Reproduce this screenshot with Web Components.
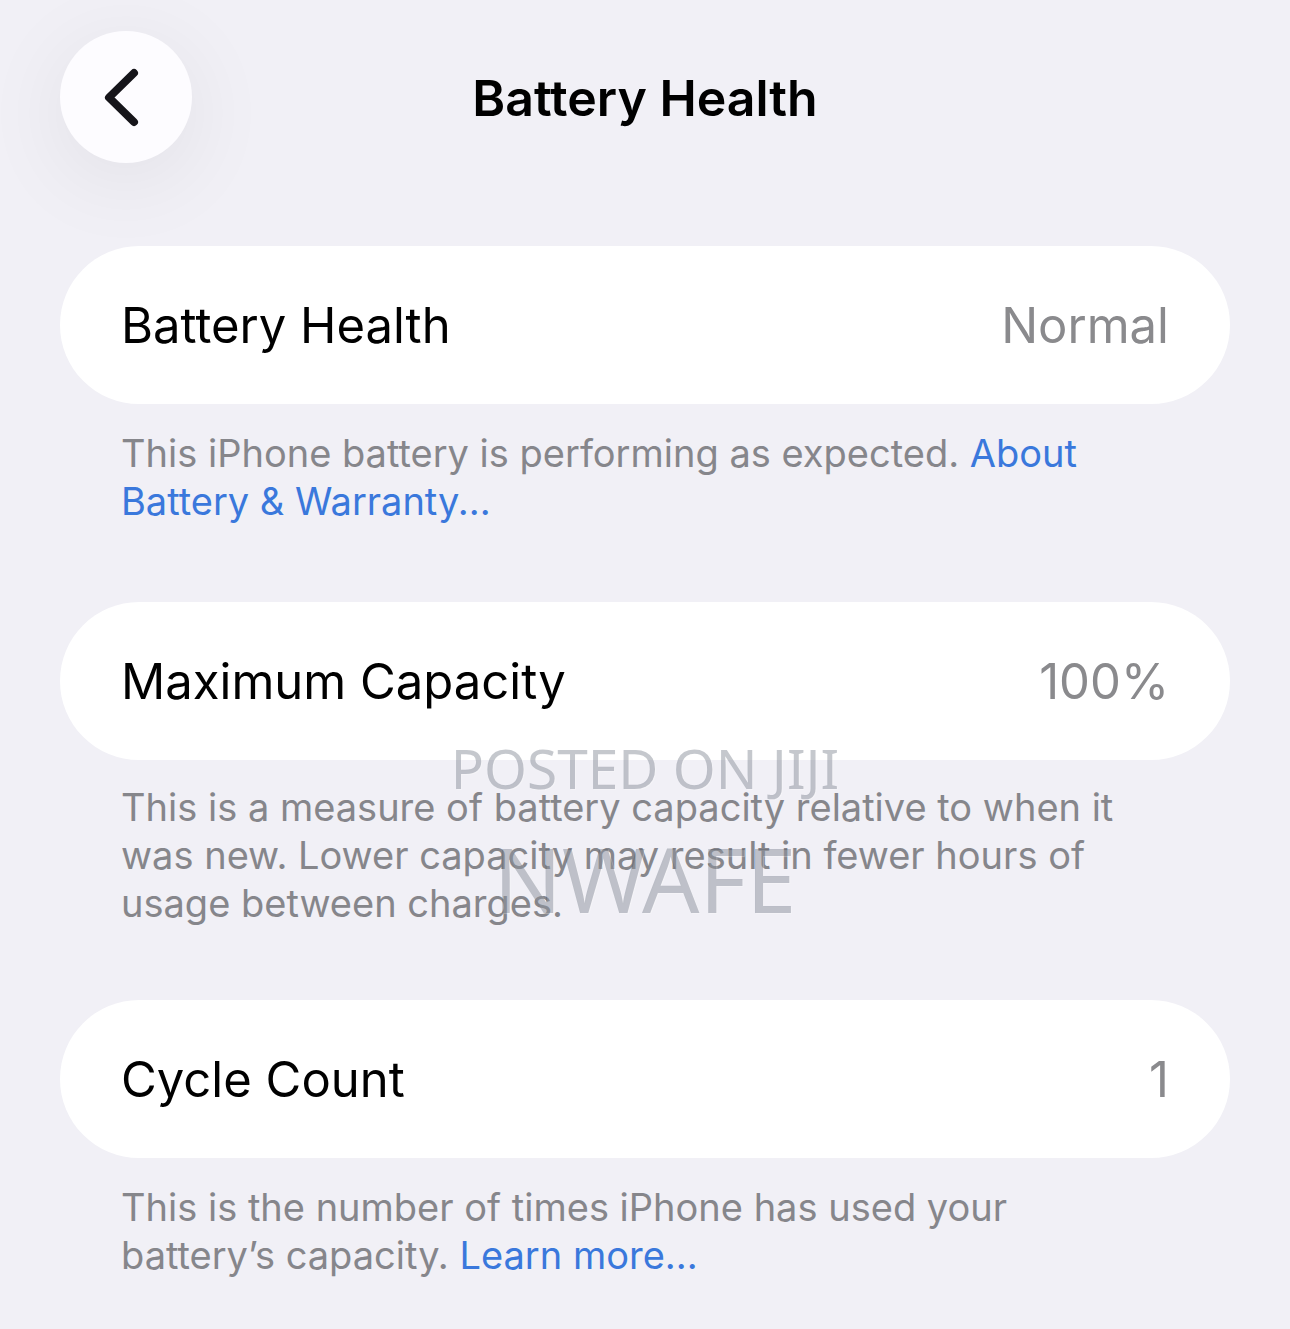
<!DOCTYPE html>
<html lang="en">
<head>
<meta charset="UTF-8">
<meta name="viewport" content="width=device-width, initial-scale=1">
<title>Battery Health</title>
<style>
    body {
        margin: 0;
        background: #f1f0f6;
        color: #000;
        font-family: Inter, "Liberation Sans", sans-serif;
    }
</style>
</head>
<body>
<settings-page>
    <nav-header slot="header">Battery Health</nav-header>

    <setting-group label="Battery Health" value="Normal" linked>
        This iPhone battery is performing as expected. <text-link href="#about">About Battery &amp; Warranty...</text-link>
    </setting-group>

    <setting-group label="Maximum Capacity" value="100%">
        This is a measure of battery capacity relative to when it was new. Lower capacity may result in fewer hours of usage between charges.
        <photo-stamp slot="overlay" name="NWAFE">POSTED ON JIJI</photo-stamp>
    </setting-group>

    <setting-group label="Cycle Count" value="1" linked>
        This is the number of times iPhone has used your battery’s capacity. <text-link href="#cycles">Learn more...</text-link>
    </setting-group>
</settings-page>

<script>
class SettingsPage extends HTMLElement {
    connectedCallback() {
        this.attachShadow({ mode: 'open' });
        this.shadowRoot.innerHTML = `
            <style>
                :host {
                    display: block;
                    padding: 0 60px;
                }

                main {
                    display: flex;
                    flex-direction: column;
                }
            </style>

            <slot name="header"></slot>
            <main><slot></slot></main>
        `;
    }
}

class NavHeader extends HTMLElement {
    connectedCallback() {
        this.attachShadow({ mode: 'open' });
        this.shadowRoot.innerHTML = `
            <style>
                :host {
                    display: block;
                    padding: 31px 0 83px;
                }

                header {
                    display: grid;
                    grid-template-columns: 132px 1fr 132px;
                    align-items: center;
                }

                h1 {
                    margin: 0;
                    padding-top: 2px;
                    font-size: 50px;
                    line-height: 60px;
                    font-weight: 600;
                    text-align: center;
                }

                button {
                    display: flex;
                    align-items: center;
                    justify-content: center;
                    width: 132px;
                    height: 132px;
                    padding: 0;
                    border: none;
                    border-radius: 50%;
                    background: #fdfcff;
                    color: #16151a;
                    box-shadow: 0 16px 90px rgba(20, 20, 0, 0.07);
                    cursor: pointer;
                }
            </style>

            <header>
                <button type="button" aria-label="Back">
                    <svg width="132" height="132" viewBox="0 0 132 132" fill="none" stroke="currentColor" stroke-width="8" stroke-linecap="round" stroke-linejoin="round">
                        <path d="M74 42 L49 66.500 L74 91"/>
                    </svg>
                </button>
                <h1><slot></slot></h1>
            </header>
        `;
    }
}

class SettingGroup extends HTMLElement {
    connectedCallback() {
        this.attachShadow({ mode: 'open' });
        this.shadowRoot.innerHTML = `
            <style>
                :host {
                    display: block;
                    position: relative;
                }

                .row {
                    display: flex;
                    justify-content: space-between;
                    align-items: center;
                    padding: 50px 61px 48px;
                    border-radius: 79px;
                    background: #fff;
                    font-size: 49px;
                    line-height: 60px;
                }

                .value {
                    color: #8a8a8d;
                }

                .note {
                    margin: 0;
                    padding: 23px 61px 73px;
                    color: #86868b;
                    font-size: 38px;
                    line-height: 48px;
                }

                /* notes that end in a link get a little more room */
                :host([linked]) .note {
                    padding-top: 25px;
                    padding-bottom: 77px;
                }
            </style>

            <div class="row">
                <span class="label"></span>
                <span class="value"></span>
            </div>
            <p class="note"><slot></slot></p>
            <slot name="overlay"></slot>
        `;
        this.shadowRoot.querySelector('.label').textContent = this.getAttribute('label');
        this.shadowRoot.querySelector('.value').textContent = this.getAttribute('value');
    }
}

class TextLink extends HTMLElement {
    connectedCallback() {
        this.attachShadow({ mode: 'open' });
        this.shadowRoot.innerHTML = `
            <style>
                :host {
                    display: inline;
                }

                a {
                    color: #3a78dc;
                    text-decoration: none;
                }
            </style>
            <a href="${this.getAttribute('href')}"><slot></slot></a>
        `;
    }
}

// Translucent stamp lying over the group it is slotted into
class PhotoStamp extends HTMLElement {
    connectedCallback() {
        this.attachShadow({ mode: 'open' });
        this.shadowRoot.innerHTML = `
            <style>
                :host {
                    position: absolute;
                    top: 126px;
                    left: 0;
                    right: 0;
                    display: flex;
                    flex-direction: column;
                    align-items: center;
                    color: rgba(62, 72, 88, 0.3);
                    font-family: "Noto Sans", "Open Sans", sans-serif;
                    text-shadow: 1px 1px 1px rgba(255, 255, 255, 0.3);
                    pointer-events: none;
                }

                .site {
                    font-size: 55px;
                    line-height: 80px;
                }

                .name {
                    font-size: 90px;
                    line-height: 140px;
                }
            </style>

            <span class="site"><slot></slot></span>
            <span class="name"></span>
        `;
        this.shadowRoot.querySelector('.name').textContent = this.getAttribute('name');
    }
}

customElements.define('settings-page', SettingsPage);
customElements.define('nav-header', NavHeader);
customElements.define('setting-group', SettingGroup);
customElements.define('text-link', TextLink);
customElements.define('photo-stamp', PhotoStamp);
</script>
</body>
</html>
